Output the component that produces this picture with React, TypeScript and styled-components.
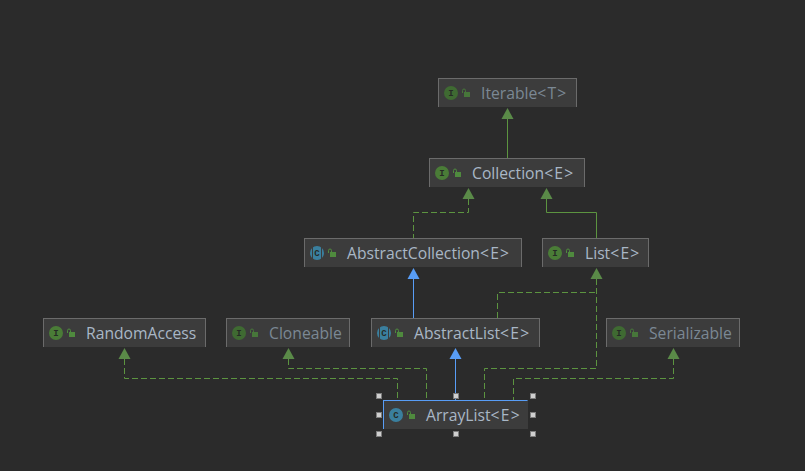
import styled, { createGlobalStyle } from "styled-components";

const GlobalStyle = createGlobalStyle`
  html, body {
    margin: 0;
    padding: 0;
    background-color: #2b2b2b;
  }
`;

const Canvas = styled.div`
  position: relative;
  width: 805px;
  height: 471px;
  overflow: hidden;
  background-color: #2b2b2b;
  font-family: "Open Sans", "Noto Sans", sans-serif;
`;

const Edges = styled.svg`
  position: absolute;
  left: 0;
  top: 0;
`;

const StyledNode = styled.div<{ $x: number; $y: number; $w: number; $dim?: boolean; $selected?: boolean }>`
  position: absolute;
  left: ${(p) => p.$x}px;
  top: ${(p) => p.$y}px;
  width: ${(p) => p.$w}px;
  height: 29px;
  box-sizing: border-box;
  display: flex;
  align-items: center;
  padding-left: 5px;
  background-color: #3c3c3c;
  border: 1px solid ${(p) => (p.$selected ? "#589df6" : "#6b6b6b")};
  border-bottom: none;
  border-right-color: ${(p) => (p.$selected ? "transparent" : "#6b6b6b")};
  color: ${(p) => (p.$dim ? "#7b8894" : "#a9b7c6")};
  font-size: 15.7px;
  line-height: 28px;
  white-space: nowrap;

  .label {
    margin-left: 9px;
  }

  .generic {
    letter-spacing: 1.2px;
  }
`;

const Handle = styled.div<{ $x: number; $y: number }>`
  position: absolute;
  left: ${(p) => p.$x - 3}px;
  top: ${(p) => p.$y - 3}px;
  width: 4px;
  height: 4px;
  background-color: #cfcfcf;
  border: 1px solid #7d7d7d;
`;

type Kind = "interface" | "abstract" | "class";

const NodeIcon = ({ kind, dim }: { kind: Kind; dim?: boolean }) => {
  const fill = kind === "interface" ? (dim ? "#3f6a32" : "#4a7c37") : "#3a7f9e";
  const lock = dim ? "#47763a" : "#4f8a3e";
  return (
    <svg width="28" height="16" viewBox="0 0 28 16" style={{ flexShrink: 0 }}>
      <circle cx="7" cy="8" r="7" fill={fill} />
      {kind === "abstract" && <path d="M2.5 0v16M11.5 0v16" stroke="#3c3c3c" strokeWidth="1" />}
      <text
        x="7"
        y="11"
        textAnchor="middle"
        fontFamily="'Liberation Mono', monospace"
        fontWeight="700"
        fontSize="9"
        fill="#262b26"
      >
        {kind === "interface" ? "I" : "C"}
      </text>
      <path d="M18.5 8V5.5a1.5 1.5 0 0 1 3 0V7" fill="none" stroke={lock} />
      <rect x="20" y="7" width="6" height="5" fill={lock} />
    </svg>
  );
};

type NodeData = {
  name: string;
  generic?: string;
  x: number;
  y: number;
  w: number;
  kind: Kind;
  dim?: boolean;
  selected?: boolean;
};

const nodes: NodeData[] = [
  { name: "Iterable", generic: "<T>", x: 438, y: 78, w: 139, kind: "interface", dim: true },
  { name: "Collection", generic: "<E>", x: 429, y: 158, w: 156, kind: "interface" },
  { name: "AbstractCollection", generic: "<E>", x: 304, y: 238, w: 218, kind: "abstract" },
  { name: "List", generic: "<E>", x: 542, y: 238, w: 107, kind: "interface" },
  { name: "RandomAccess", x: 43, y: 318, w: 163, kind: "interface" },
  { name: "Cloneable", x: 226, y: 318, w: 124, kind: "interface", dim: true },
  { name: "AbstractList", generic: "<E>", x: 371, y: 318, w: 169, kind: "abstract" },
  { name: "Serializable", x: 606, y: 318, w: 134, kind: "interface", dim: true },
  { name: "ArrayList", generic: "<E>", x: 383, y: 400, w: 145, kind: "class", selected: true },
];

const GREEN = "#5c9440";
const HEAD = "#5a8a48";
const BLUE = "#589df6";

const dashed = [
  "M468.5 199V212.5H413.5V238",
  "M596.5 279V368.5H484.5V400",
  "M497.5 318V292.5H596.5",
  "M673.5 359V378.5H513.5V400",
  "M124.5 359V378.5H397.5V400",
  "M288.5 359V368.5H426.5V400",
];

const solid = ["M507.5 119V158", "M546.5 199V212.5H596.5V238"];
const blue = ["M413.5 279V318", "M455.5 359V400"];

const Arrow = ({ x, y, color }: { x: number; y: number; color: string }) => (
  <polygon points={`${x},${y} ${x + 6},${y + 11} ${x - 6},${y + 11}`} fill={color} />
);

const handles = [
  [379, 396],
  [456, 396],
  [533, 396],
  [379, 415],
  [533, 415],
  [379, 434],
  [456, 434],
  [533, 434],
];

export default function App() {
  return (
    <>
      <GlobalStyle />
      <Canvas>
        <Edges width="805" height="471" viewBox="0 0 805 471" fill="none">
          {dashed.map((d) => (
            <path key={d} d={d} stroke={GREEN} strokeDasharray="6 3" />
          ))}
          {solid.map((d) => (
            <path key={d} d={d} stroke={GREEN} />
          ))}
          {blue.map((d) => (
            <path key={d} d={d} stroke={BLUE} />
          ))}
          <Arrow x={507.5} y={108} color={HEAD} />
          <Arrow x={468.5} y={188} color={HEAD} />
          <Arrow x={546.5} y={188} color={HEAD} />
          <Arrow x={596.5} y={268} color={HEAD} />
          <Arrow x={124.5} y={348} color={HEAD} />
          <Arrow x={288.5} y={348} color={HEAD} />
          <Arrow x={673.5} y={348} color={HEAD} />
          <Arrow x={413.5} y={268} color={BLUE} />
          <Arrow x={455.5} y={348} color={BLUE} />
        </Edges>
        {nodes.map((n) => (
          <StyledNode key={n.name} $x={n.x} $y={n.y} $w={n.w} $dim={n.dim} $selected={n.selected}>
            <NodeIcon kind={n.kind} dim={n.dim} />
            <span className="label">
              {n.name}
              {n.generic && <span className="generic">{n.generic}</span>}
            </span>
          </StyledNode>
        ))}
        {handles.map(([x, y]) => (
          <Handle key={`${x}-${y}`} $x={x} $y={y} />
        ))}
      </Canvas>
    </>
  );
}
